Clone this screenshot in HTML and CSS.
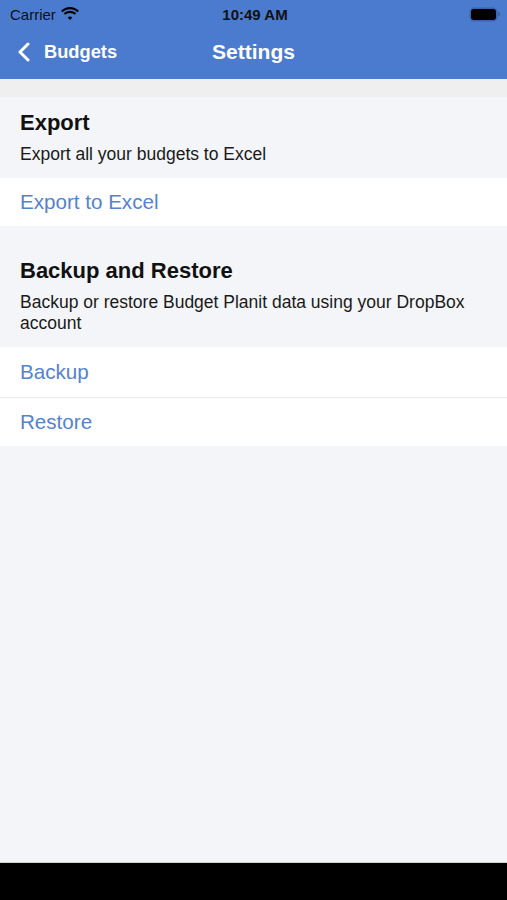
FILE: index.html
```html
<!DOCTYPE html>
<html lang="en">
<head>
  <meta charset="UTF-8">
  <meta name="viewport" content="width=device-width, initial-scale=1.0">
  <title>Settings</title>
  <link rel="stylesheet" href="styles.css">
</head>
<body>
  <div class="screen">
    <div class="top-bar">
      <div class="status-bar">
        <div class="carrier">
          Carrier
          <svg class="wifi" width="18" height="13" viewBox="0 0 18 13">
            <path d="M9 2.2c2.9 0 5.5 1.1 7.5 3l1.4-1.5C15.5 1.4 12.4 0 9 0S2.5 1.4.1 3.7l1.4 1.5c2-1.9 4.6-3 7.5-3z" fill="#000"/>
            <path d="M9 5.9c1.9 0 3.6.7 4.9 1.9l1.4-1.5C13.6 4.7 11.4 3.8 9 3.8S4.4 4.7 2.7 6.3l1.4 1.5C5.4 6.6 7.1 5.9 9 5.9z" fill="#000"/>
            <path d="M9 9.5c.9 0 1.7.3 2.3.9L9 13l-2.3-2.6c.6-.6 1.4-.9 2.3-.9z" fill="#000"/>
          </svg>
        </div>
        <div class="clock">10:49 AM</div>
        <div class="battery">
          <span class="battery-body"></span>
          <span class="battery-cap"></span>
        </div>
      </div>
      <div class="nav-bar">
        <a class="back-link" href="#">
          <svg width="12" height="20" viewBox="0 0 12 20">
            <path d="M10 2L2 10l8 8" fill="none" stroke="#fff" stroke-width="3" stroke-linecap="round" stroke-linejoin="round"/>
          </svg>
          Budgets
        </a>
        <div class="nav-title">Settings</div>
      </div>
    </div>

    <div class="content">
      <div class="top-band"></div>

      <div class="section">
        <div class="section-header">
          <h2>Export</h2>
          <p>Export all your budgets to Excel</p>
        </div>
        <div class="row">Export to Excel</div>
      </div>

      <div class="section section-spaced">
        <div class="section-header">
          <h2>Backup and Restore</h2>
          <p>Backup or restore Budget Planit data using your DropBox account</p>
        </div>
        <div class="row row-divided">Backup</div>
        <div class="row">Restore</div>
      </div>
    </div>

    <div class="home-bar"></div>
  </div>
</body>
</html>
```

FILE: styles.css
```css
/* General Styling */
* {
  box-sizing: border-box;
}

body {
  margin: 0;
  padding: 0;
  font-family: "Liberation Sans", Arial, sans-serif;
  background-color: #f3f5f8;
  color: #111;
}

.screen {
  display: flex;
  flex-direction: column;
  height: 900px;
}

/* Header */
.top-bar {
  background-color: #4a7bcf;
  height: 79px;
}

.status-bar {
  display: flex;
  align-items: center;
  justify-content: space-between;
  height: 28px;
  padding: 0 7px 0 10px;
}

.carrier {
  display: flex;
  align-items: center;
  gap: 5px;
  width: 120px;
  font-size: 15px;
  color: #111;
}

.wifi {
  margin-top: -2px;
}

.clock {
  font-size: 15px;
  font-weight: bold;
  color: #111;
}

.battery {
  display: flex;
  align-items: center;
  justify-content: flex-end;
  width: 120px;
}

.battery-body {
  width: 25px;
  height: 11px;
  border-radius: 3px;
  background-color: #000;
  box-shadow: 0 0 0 1.5px #3d63a8;
}

.battery-cap {
  width: 2px;
  height: 4px;
  margin-left: 2px;
  border-radius: 0 1px 1px 0;
  background-color: #3d63a8;
}

.nav-bar {
  position: relative;
  display: flex;
  align-items: center;
  height: 48px;
}

.back-link {
  display: flex;
  align-items: center;
  gap: 14px;
  padding-left: 18px;
  color: #fff;
  font-size: 18.3px;
  font-weight: bold;
  text-decoration: none;
}

.nav-title {
  position: absolute;
  left: 0;
  right: 0;
  text-align: center;
  font-size: 21px;
  font-weight: bold;
  color: #fff;
  pointer-events: none;
}

/* Content */
.content {
  flex: 1;
}

.top-band {
  height: 18px;
  background-color: #efefef;
}

.section-spaced {
  margin-top: 19px;
}

.section-header {
  padding: 13px 20px 13px;
}

.section-header h2 {
  margin: 0 0 8px;
  font-size: 22px;
  line-height: 26px;
  font-weight: bold;
  color: #111;
}

.section-header p {
  margin: 0;
  font-size: 17.5px;
  line-height: 21px;
  color: #1a1a1a;
}

.row {
  display: flex;
  align-items: center;
  height: 48px;
  padding: 0 20px;
  background-color: #fff;
  color: #5582cf;
  font-size: 20.6px;
}

.row-divided {
  height: 51px;
  border-bottom: 1px solid #ebebeb;
}

.home-bar {
  height: 38px;
  background-color: #000;
  border-top: 1px solid #d0d0d0;
}
```
